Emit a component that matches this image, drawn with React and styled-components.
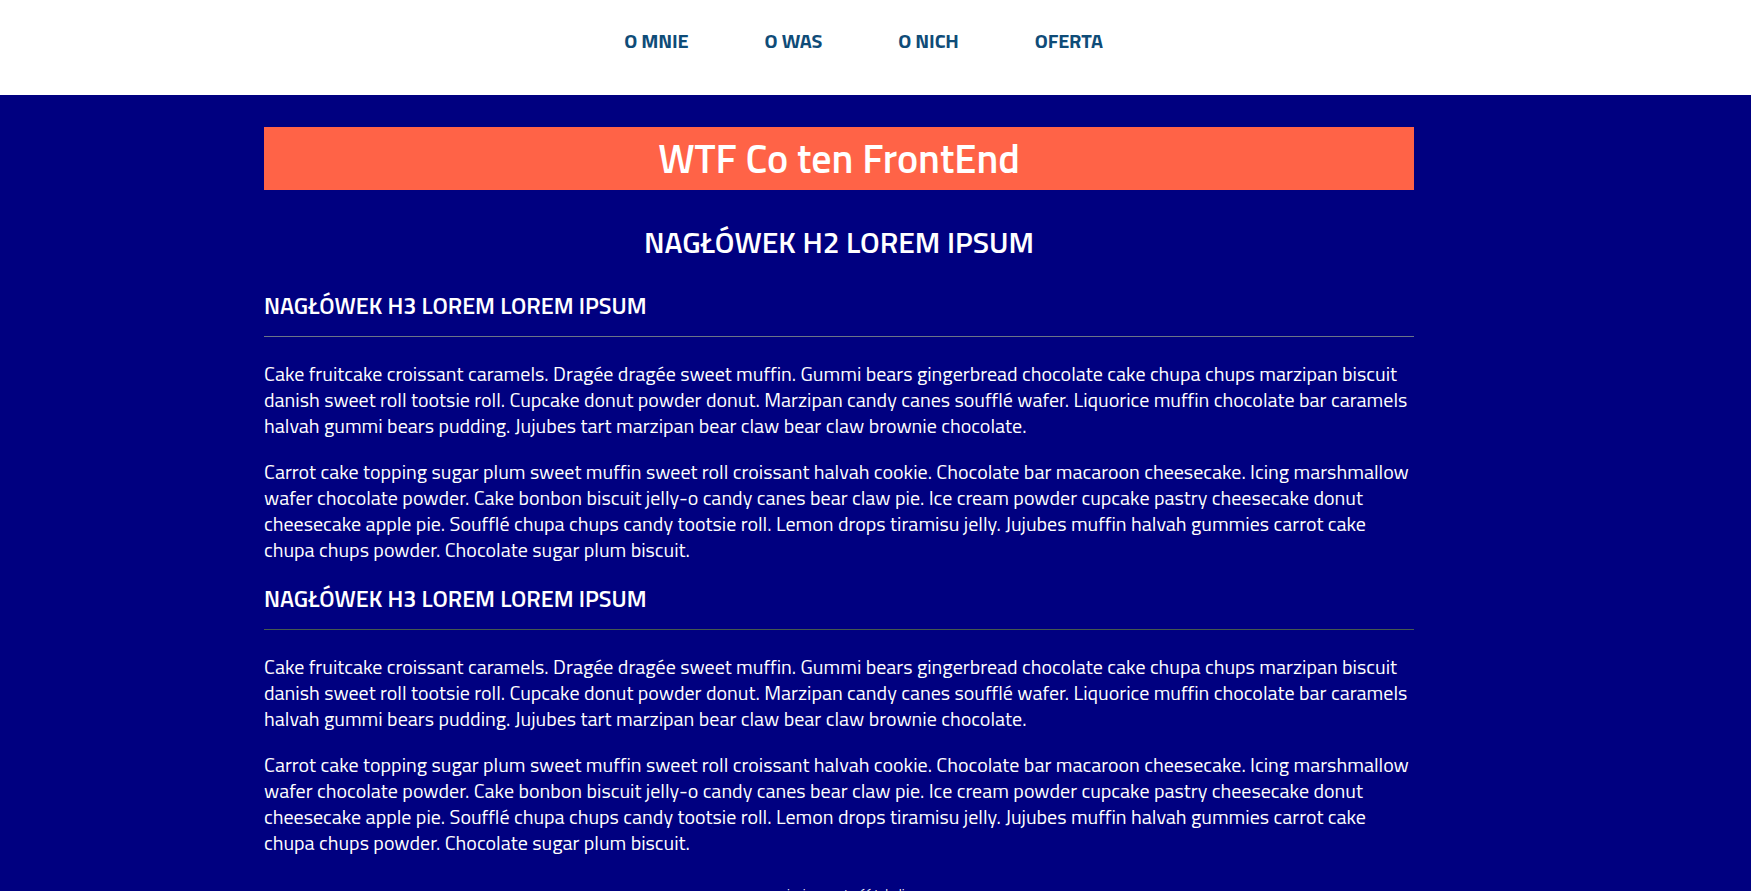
import React from "react";
import styled, { createGlobalStyle } from "styled-components";

const GlobalStyle = createGlobalStyle`
  html, body {
    margin: 0;
    padding: 0;
    background: #000080;
  }
  body {
    font-family: "Titillium Web", Roboto, "Liberation Sans", sans-serif;
    color: #ffffff;
  }
`;

const Header = styled.header`
  background: #ffffff;
  height: 95px;
  display: flex;
  justify-content: center;
  padding-right: 24px;
  box-sizing: border-box;
`;

const NavList = styled.ul`
  list-style: none;
  margin: 0;
  padding: 0;
  display: flex;
  gap: 76px;
  align-items: flex-start;
  padding-top: 27px;
`;

const NavItem = styled.li`
  font-size: 20px;
  line-height: 28px;
  font-weight: 700;
  letter-spacing: -0.15px;
  color: #0f4c78;
  text-transform: uppercase;
`;

const Main = styled.main`
  padding: 32px 0 0 264px;
`;

const Container = styled.div`
  width: 1150px;
`;

const Banner = styled.h1`
  margin: 0;
  height: 63px;
  background: #ff6347;
  display: flex;
  align-items: center;
  justify-content: center;
  font-size: 40px;
  font-weight: 600;
  color: #ffffff;
`;

const Heading2 = styled.h2`
  margin: 34px 0 2px;
  text-align: center;
  font-size: 30px;
  line-height: 36px;
  font-weight: 600;
  text-transform: uppercase;
`;

const Section = styled.section`
  display: flex;
  flex-direction: column;
`;

const Heading3 = styled.h3`
  margin: ${(p) => (p.$first ? "29px" : "21px")} 0 1px;
  font-size: 23.4px;
  line-height: 28px;
  font-weight: 600;
  text-transform: uppercase;
`;

const Rule = styled.hr`
  margin: 16px 0 0;
  border: none;
  height: 1px;
  background: ${(p) => p.$tone};
`;

const Paragraph = styled.p`
  margin: ${(p) => (p.$lead ? "24px" : "20px")} 0 0;
  font-size: 20px;
  line-height: 26px;
`;

const Caption = styled.div`
  margin-top: 30px;
  text-align: center;
  font-size: 13px;
  line-height: 16px;
`;

const p1 =
  "Cake fruitcake croissant caramels. Dragée dragée sweet muffin. Gummi bears gingerbread chocolate cake chupa chups marzipan biscuit danish sweet roll tootsie roll. Cupcake donut powder donut. Marzipan candy canes soufflé wafer. Liquorice muffin chocolate bar caramels halvah gummi bears pudding. Jujubes tart marzipan bear claw bear claw brownie chocolate.";
const p2 =
  "Carrot cake topping sugar plum sweet muffin sweet roll croissant halvah cookie. Chocolate bar macaroon cheesecake. Icing marshmallow wafer chocolate powder. Cake bonbon biscuit jelly-o candy canes bear claw pie. Ice cream powder cupcake pastry cheesecake donut cheesecake apple pie. Soufflé chupa chups candy tootsie roll. Lemon drops tiramisu jelly. Jujubes muffin halvah gummies carrot cake chupa chups powder. Chocolate sugar plum biscuit.";

const sections = [
  { tone: "#6a7488" },
  { tone: "#46594e" },
];

export default function App() {
  return (
    <>
      <GlobalStyle />
      <Header>
        <nav>
          <NavList>
            <NavItem>O mnie</NavItem>
            <NavItem>O was</NavItem>
            <NavItem>O nich</NavItem>
            <NavItem>Oferta</NavItem>
          </NavList>
        </nav>
      </Header>
      <Main>
        <Container>
          <Banner>WTF Co ten FrontEnd</Banner>
          <Heading2>Nagłówek h2 lorem ipsum</Heading2>
          {sections.map((s, i) => (
            <Section key={i}>
              <Heading3 $first={i === 0}>Nagłówek h3 lorem lorem ipsum</Heading3>
              <Rule $tone={s.tone} />
              <Paragraph $lead>{p1}</Paragraph>
              <Paragraph>{p2}</Paragraph>
            </Section>
          ))}
          <Caption>opisuje zawatrość tabeli</Caption>
        </Container>
      </Main>
    </>
  );
}
